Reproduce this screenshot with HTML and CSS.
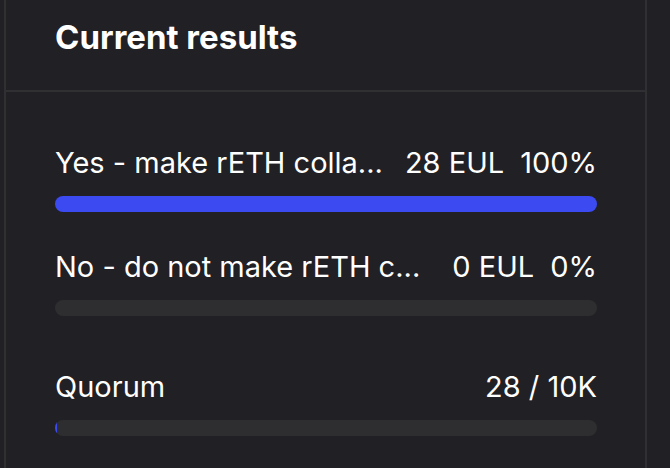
FILE: index.html
```html
<!DOCTYPE html>
<html lang="en">
<head>
  <meta charset="UTF-8">
  <meta name="viewport" content="width=device-width, initial-scale=1.0">
  <title>Current results</title>
  <link rel="stylesheet" href="styles.css">
</head>
<body>
  <!-- 投票結果カード -->
  <div class="results-card">
    <div class="results-header">Current results</div>

    <div class="results-body">
      <div class="result-row">
        <div class="result-line">
          <span class="result-label">Yes - make rETH colla...</span>
          <span class="result-amount">28 EUL</span>
          <span class="result-percent">100%</span>
        </div>
        <div class="bar-track"><div class="bar-fill" style="width:100%"></div></div>
      </div>

      <div class="result-row">
        <div class="result-line">
          <span class="result-label">No - do not make rETH c...</span>
          <span class="result-amount">0 EUL</span>
          <span class="result-percent">0%</span>
        </div>
        <div class="bar-track"><div class="bar-fill" style="width:0%"></div></div>
      </div>

      <div class="result-row quorum">
        <div class="result-line">
          <span class="result-label">Quorum</span>
          <span class="result-amount">28 / 10K</span>
        </div>
        <div class="bar-track"><div class="bar-fill" style="width:0.28%"></div></div>
      </div>
    </div>
  </div>
</body>
</html>
```

FILE: styles.css
```css
body {
  margin: 0;
  font-family: 'Inter', 'Noto Sans', sans-serif;
  background: #212025;
  color: #fff;
}
.results-card {
  margin-left: 4px;
  width: 639px;
  height: 468px;
  border: 2px solid #303032;
  border-top: none;
  border-bottom: none;
}
.results-header {
  font-size: 33px;
  font-weight: 700;
  line-height: 40px;
  padding: 17px 48px 33px 49px;
  border-bottom: 2px solid #303032;
}
.results-body {
  padding: 54px 48px 0 49px;
  display: flex;
  flex-direction: column;
  gap: 38px;
}
.result-row {
  display: flex;
  flex-direction: column;
  gap: 16px;
}
.result-row.quorum {
  margin-top: 16px;
}
.result-line {
  display: flex;
  align-items: baseline;
  gap: 16px;
  font-size: 29px;
  line-height: 34px;
  white-space: nowrap;
}
.result-label {
  flex: 1;
}
.bar-track {
  height: 16px;
  border-radius: 8px;
  background: #2e2e30;
  overflow: hidden;
}
.bar-fill {
  height: 100%;
  background: #3c4af2;
}
```
